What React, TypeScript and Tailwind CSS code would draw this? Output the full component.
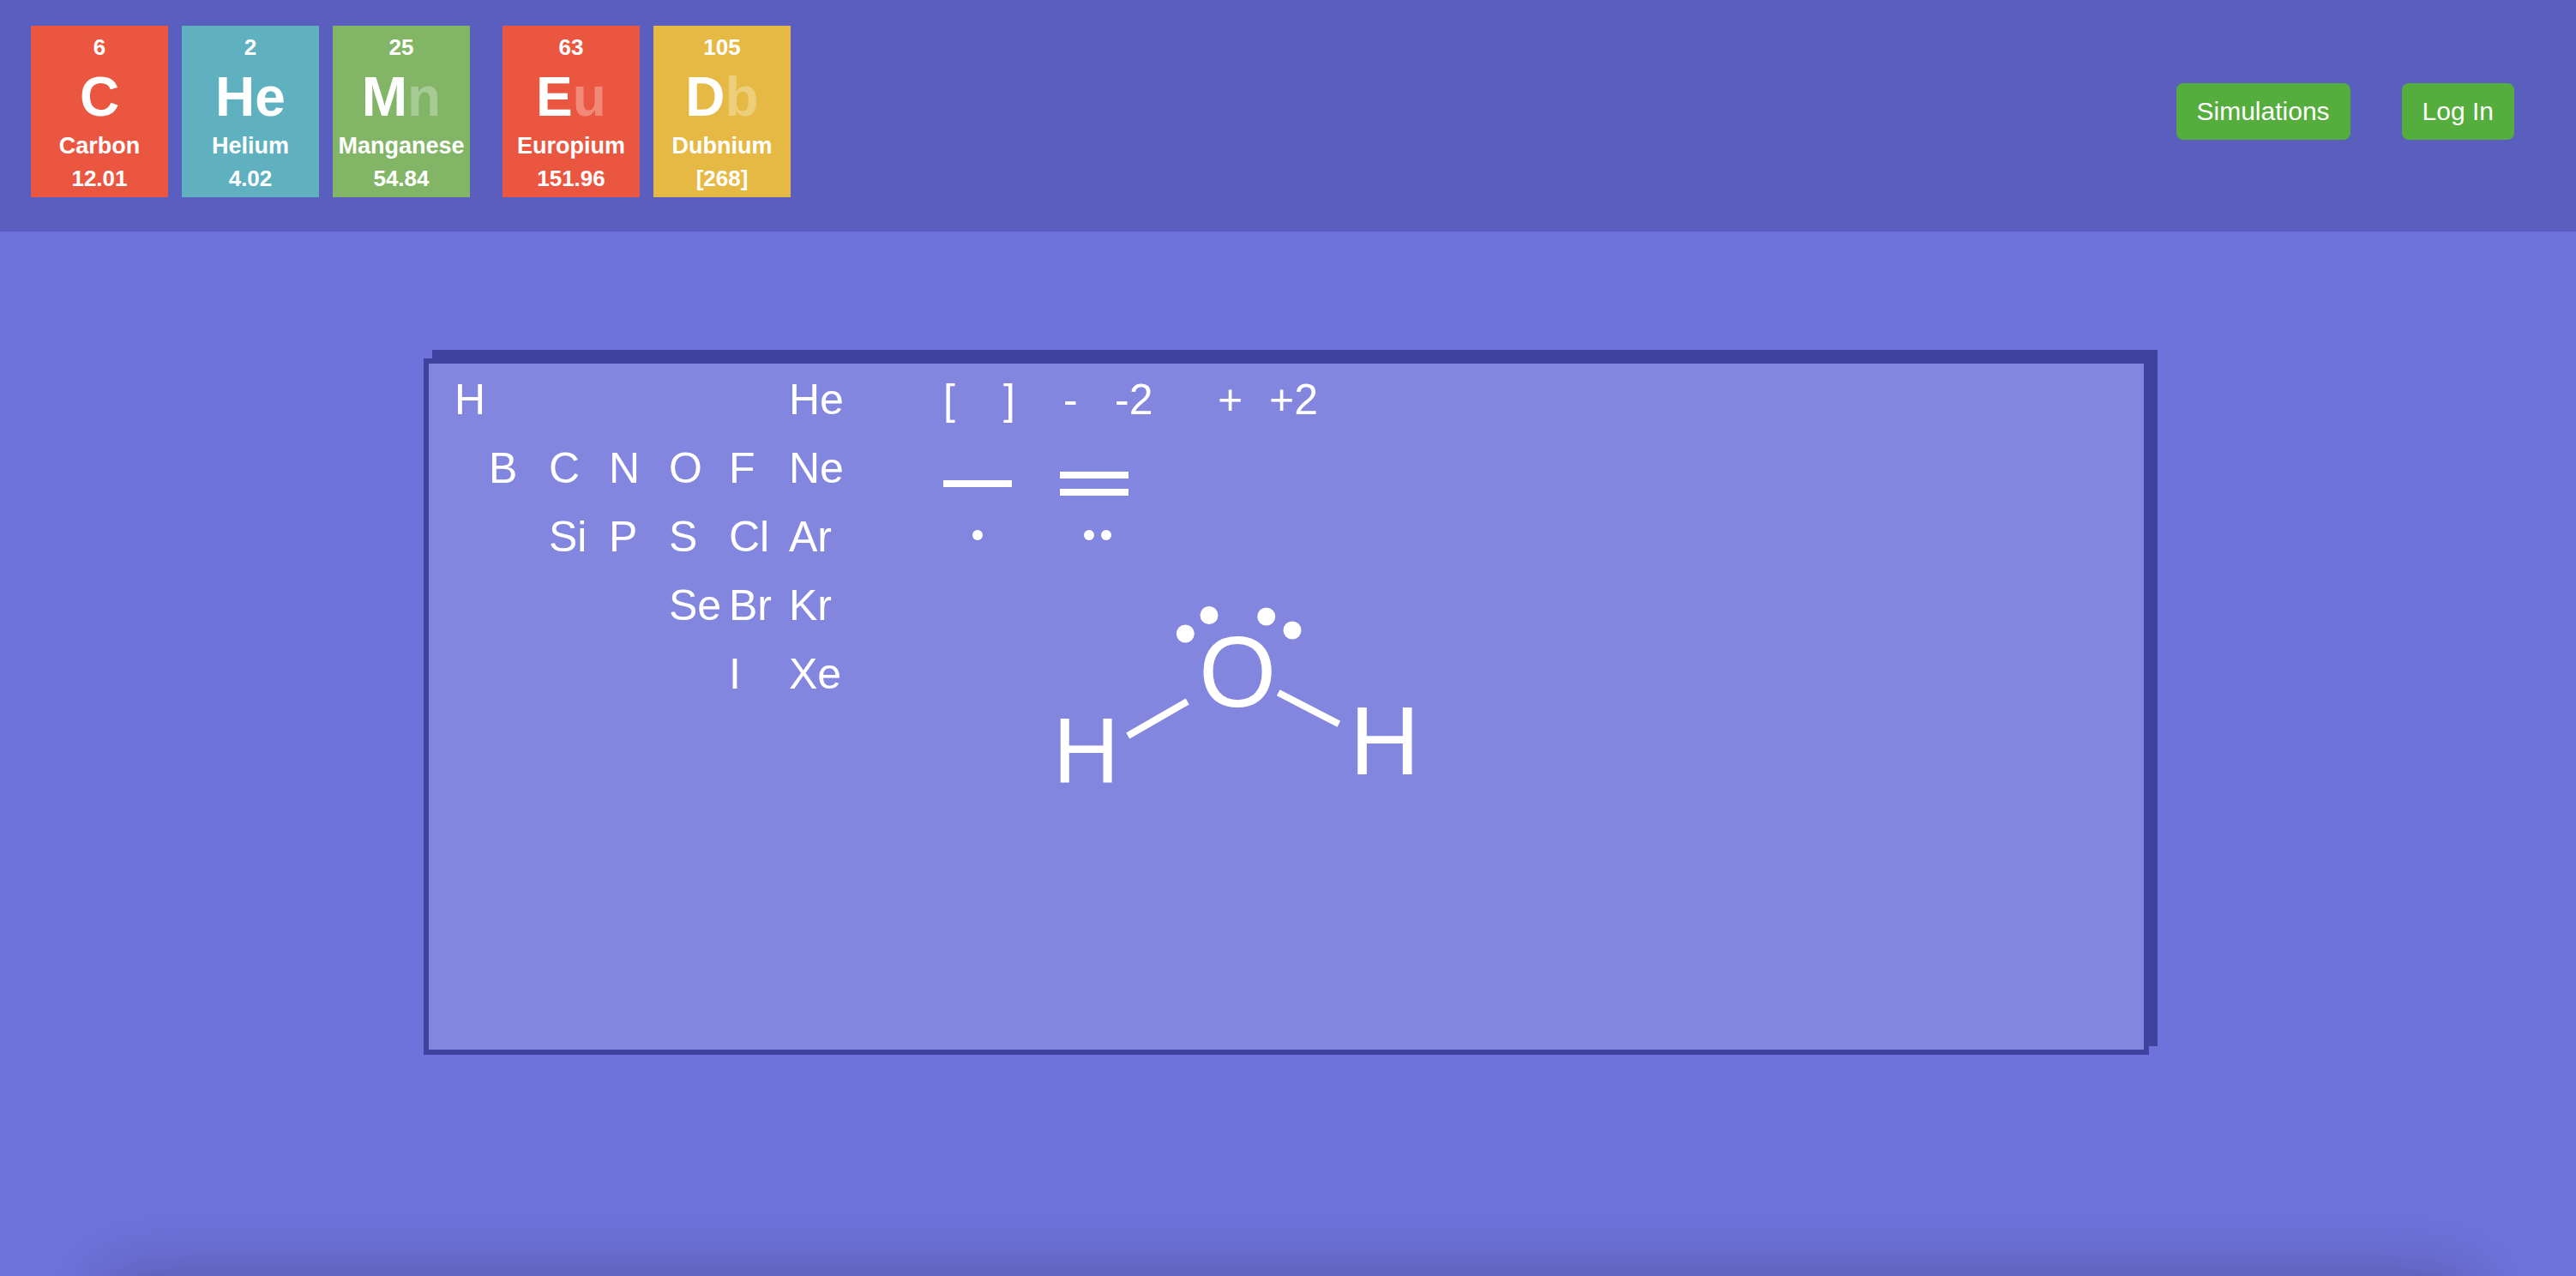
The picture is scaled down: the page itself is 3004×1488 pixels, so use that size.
type Tile = {
  number: string;
  symbol: string;
  muted?: string;
  name: string;
  mass: string;
  color: string;
};

const firstWord: Tile[] = [
  { number: "6", symbol: "C", name: "Carbon", mass: "12.01", color: "bg-[#eb5640]" },
  { number: "2", symbol: "He", name: "Helium", mass: "4.02", color: "bg-[#5fb1c0]" },
  { number: "25", symbol: "M", muted: "n", name: "Manganese", mass: "54.84", color: "bg-[#82b566]" },
];

const secondWord: Tile[] = [
  { number: "63", symbol: "E", muted: "u", name: "Europium", mass: "151.96", color: "bg-[#eb5640]" },
  { number: "105", symbol: "D", muted: "b", name: "Dubnium", mass: "[268]", color: "bg-[#e5b943]" },
];

const elements = [
  ["H", "", "", "", "", "", "He"],
  ["", "B", "C", "N", "O", "F", "Ne"],
  ["", "", "Si", "P", "S", "Cl", "Ar"],
  ["", "", "", "", "Se", "Br", "Kr"],
  ["", "", "", "", "", "I", "Xe"],
];

const charges = ["[", "]", "-", "-2", "+", "+2"];

function ElementTile({ number, symbol, muted, name, mass, color }: Tile) {
  return (
    <div className={`flex h-[200px] w-[160px] flex-col items-center pt-[3px] font-bold text-white ${color}`}>
      <span className="text-[26px] leading-[44px]">{number}</span>
      <span className="text-[64px] leading-[72px]">
        {symbol}
        {muted && <span className="text-white/30">{muted}</span>}
      </span>
      <span className="text-[27px] leading-[42px]">{name}</span>
      <span className="text-[26px] leading-[34px]">{mass}</span>
    </div>
  );
}

function Header() {
  return (
    <header className="flex h-[270px] items-start justify-between bg-[#5a5ebf] pr-[72px] pl-9">
      <div className="flex gap-[38px] pt-[30px]">
        {[firstWord, secondWord].map((word, i) => (
          <div key={i} className="flex gap-4">
            {word.map((tile) => (
              <ElementTile key={tile.name} {...tile} />
            ))}
          </div>
        ))}
      </div>
      <nav className="flex gap-[60px] pt-[97px] text-[30px] leading-[66px] text-white">
        <button className="rounded-lg bg-[#54ad3c] px-6">Simulations</button>
        <button className="rounded-lg bg-[#54ad3c] px-6">Log In</button>
      </nav>
    </header>
  );
}

function ElementPalette() {
  return (
    <div className="grid auto-rows-[80px] grid-cols-[40px_repeat(6,70px)]">
      {elements.flat().map((symbol, i) =>
        symbol ? (
          <button key={i} className="text-left whitespace-nowrap">
            {symbol}
          </button>
        ) : (
          <span key={i} />
        ),
      )}
    </div>
  );
}

function BondPalette() {
  return (
    <div className="flex flex-col">
      <div className="grid h-20 grid-cols-[70px_70px_60px_120px_60px_80px]">
        {charges.map((charge) => (
          <button key={charge} className="text-left whitespace-nowrap">
            {charge}
          </button>
        ))}
      </div>
      <div className="flex gap-14">
        <button aria-label="Single bond">
          <svg className="block size-20" viewBox="0 0 80 80" fill="white">
            <rect y="54" width="80" height="8" />
          </svg>
        </button>
        <button aria-label="Double bond">
          <svg className="block size-20" viewBox="0 0 80 80" fill="white">
            <rect y="44" width="80" height="8" />
            <rect y="64" width="80" height="8" />
          </svg>
        </button>
      </div>
      <div className="flex gap-14">
        <button aria-label="Single electron">
          <svg className="block size-20" viewBox="0 0 80 80" fill="white">
            <circle cx="40" cy="38" r="6" />
          </svg>
        </button>
        <button aria-label="Lone pair">
          <svg className="block size-20" viewBox="0 0 80 80" fill="white">
            <circle cx="34" cy="38" r="6" />
            <circle cx="54" cy="38" r="6" />
          </svg>
        </button>
      </div>
    </div>
  );
}

function WaterMolecule() {
  return (
    <svg
      className="absolute top-[276px] left-[720px] h-[250px] w-[440px]"
      viewBox="0 0 440 250"
      fill="white"
      stroke="none"
      role="img"
      aria-label="Water molecule"
    >
      <circle cx="162.3" cy="39" r="10.5" />
      <circle cx="190" cy="17.5" r="10.5" />
      <circle cx="256.7" cy="19" r="10.5" />
      <circle cx="287" cy="35" r="10.5" />
      <path d="M95.3 158L164.7 118M270.7 107.7L341.3 144.3" stroke="white" strokeWidth="8" />
      <text x="8" y="212" fontSize="107">H</text>
      <text x="178" y="124" fontSize="116">O</text>
      <text x="354" y="203" fontSize="113">H</text>
    </svg>
  );
}

export default function App() {
  return (
    <div className="relative min-h-screen overflow-hidden bg-[#6e73db] font-['Liberation_Sans',Arial,sans-serif]">
      <Header />
      <main className="pt-[148px] pr-1">
        <section className="relative mx-auto flex min-h-[812px] w-full max-w-[2012px] items-start gap-[110px] border-6 border-[#3f439f] bg-[#8286df] pt-0.5 pl-[30px] text-[50px] leading-[80px] text-white shadow-[10px_-10px_0_#3f439f]">
          <ElementPalette />
          <BondPalette />
          <WaterMolecule />
        </section>
      </main>
      <div className="pointer-events-none absolute inset-x-[120px] top-full h-40 shadow-[0_0_84px_rgba(0,0,0,0.25)]" />
    </div>
  );
}
